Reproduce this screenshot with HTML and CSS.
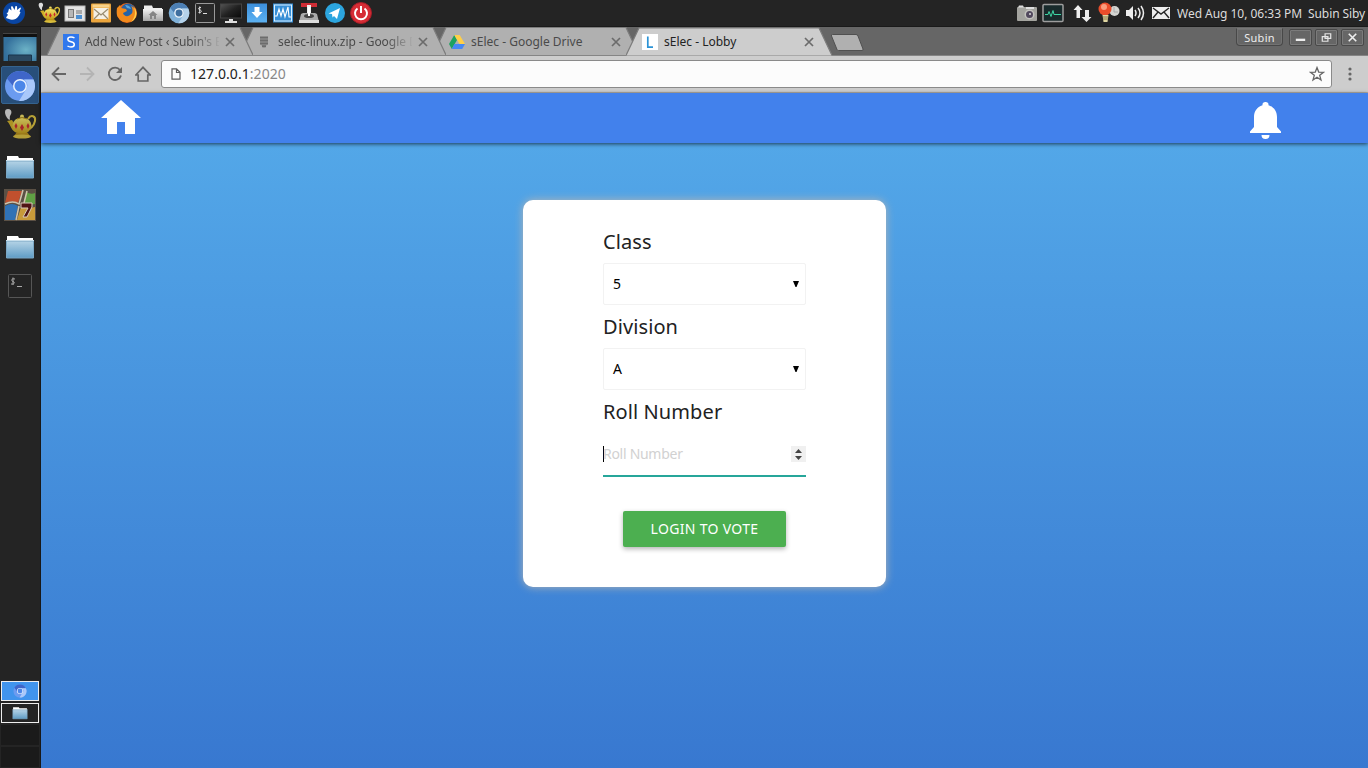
FILE: index.html
```html
<!DOCTYPE html>
<html lang="en">
<head>
<meta charset="utf-8">
<title>sElec - Lobby</title>
<link rel="stylesheet" href="styles.css">
</head>
<body>
<svg width="0" height="0" class="defs">
  <defs>
    <linearGradient id="gold" x2="0" y2="1"><stop stop-color="#f5e56a"/><stop offset="1" stop-color="#c19a16"/></linearGradient>
    <linearGradient id="fold" x2="0" y2="1"><stop stop-color="#b5d3e6"/><stop offset="1" stop-color="#5f9cc5"/></linearGradient>
    <linearGradient id="sky" x2="0" y2="1"><stop stop-color="#3b8edb"/><stop offset="1" stop-color="#5db2f2"/></linearGradient>
    <linearGradient id="silver" x2="0" y2="1"><stop stop-color="#f2f2f2"/><stop offset="1" stop-color="#a5a5a5"/></linearGradient>
    <linearGradient id="screen" x2="1" y2="1"><stop stop-color="#555"/><stop offset=".5" stop-color="#222"/><stop offset="1" stop-color="#080808"/></linearGradient>
    <radialGradient id="desk" cx=".68" cy=".55" r=".65"><stop stop-color="#6cb2c6"/><stop offset="1" stop-color="#34709c"/></radialGradient>
    <symbol id="teapot" viewBox="0 0 32 32">
      <path d="M4 11C0 6 0 1 4 1s4 4 2.500 6 0 4-1 5z" fill="#ddd"/>
      <path d="M24 11c3-5 8-3 7 2s-5 9-9 9" fill="none" stroke="#dcc13b" stroke-width="2"/>
      <path d="M3 13l5-1 3 5 2 8C7 23 7 17 3 13z" fill="#cfae25"/>
      <path d="M10 28h16l-3-4H13z" fill="#b78e18"/>
      <ellipse cx="18" cy="17.500" rx="9.500" ry="8" fill="url(#gold)"/>
      <ellipse cx="18" cy="28.500" rx="9" ry="2" fill="#d9bd3c"/>
      <circle cx="18" cy="8.500" r="2" fill="#efdc65"/>
      <path d="M13 11q5-3 10 0" fill="none" stroke="#a98510"/>
      <path d="M12 15l1.500 3-1.500 3-1.500-3zM18 16l2 3.500-2 3.500-2-3.500zM24 15l1.500 3-1.500 3-1.500-3z" fill="#c9252b"/>
    </symbol>
    <symbol id="folder" viewBox="0 0 30 24">
      <path d="M2 5V1h11l1 2h14v3H2z" fill="#fff"/><path d="M1.500 6h27v17h-27z" fill="url(#fold)" stroke="#7aa6c4"/><path d="M1 5.500h28" stroke="#c9dfec"/>
    </symbol>
    <symbol id="chromium" viewBox="0 0 32 32">
      <circle cx="16" cy="16" r="15" fill="#6b9bf0"/>
      <path d="M3 8.500A15 15 0 0 1 29.500 9.500H16a7 7 0 0 0-6.500 7z" fill="#3f66c9"/>
      <path d="M29.500 9.500A15 15 0 0 1 15 31l7-11.500a7 7 0 0 0-2-10z" fill="#a9c8fa"/>
      <circle cx="16" cy="16" r="7" fill="#e7f0fd"/><circle cx="16" cy="16" r="5.500" fill="#4b86e8"/>
    </symbol>
    <symbol id="chromium-pale" viewBox="0 0 32 32">
      <circle cx="16" cy="16" r="15" fill="#7fb0d8"/>
      <path d="M3 8.500A15 15 0 0 1 29.500 9.500H16a7 7 0 0 0-6.500 7z" fill="#4c7fb4"/>
      <path d="M29.500 9.500A15 15 0 0 1 15 31l7-11.500a7 7 0 0 0-2-10z" fill="#b4d2ea"/>
      <circle cx="16" cy="16" r="7" fill="#edf4fa"/><circle cx="16" cy="16" r="5" fill="#3f6f9f"/>
    </symbol>
    <symbol id="close" viewBox="0 0 10 10"><path d="M1 1l8 8M9 1l-8 8" stroke="#6b6b6b" stroke-width="1.700"/></symbol>
    <symbol id="shape" viewBox="0 0 206 28"><path d="M0 28L13 .5H193L206 28" stroke="#7c7c7c" stroke-width="1.200"/></symbol>
  </defs>
</svg>

<header class="panel">
  <svg class="start" viewBox="0 0 24 24"><circle cx="12" cy="12" r="11" fill="#0945a3"/><path d="M7 7.500l2.500 2-.5-4 1.500-.3 2 3.800L13.500 5l1.500.3.200 3.700 3-2.500.8.500-1.500 3.500 1 1-1.500 3c-2 4-7 5-10 3.500L4 17l1-2 1-1-1.500-2 1.500-.5z" fill="#fff"/></svg>
  <div class="launchers">
    <svg><use href="#teapot"/></svg>
    <svg viewBox="0 0 22 22"><rect x="1" y="4" width="20" height="15" fill="#e4e4e4" stroke="#bbb"/><rect x="4" y="7" width="6" height="9" fill="#777"/><rect x="5" y="8" width="4" height="7" fill="#b7b7b7"/><path d="M12 8h6v4h-6z" fill="#aaa"/><path d="M12 13h6v4h-6z" fill="#4c8fd2"/></svg>
    <svg viewBox="0 0 22 22"><rect x="1" y="1.500" width="20" height="19" rx="1" fill="#eba53d"/><path d="M2.500 2.500h17v3h-17z" fill="#f8d28a"/><rect x="3.500" y="6" width="15" height="11" fill="#f5f0e4"/><path d="M4 7l7 6 7-6M4 17l5-5M18 17l-5-5" fill="none" stroke="#9a8c70" stroke-width="1.200"/></svg>
    <svg viewBox="0 0 22 22"><circle cx="11" cy="11" r="10" fill="#e8681a"/><circle cx="12" cy="8.500" r="7" fill="#2663a8"/><path d="M9 3c3 0 5 1 6 4l-4-1z" fill="#59a5dc"/><path d="M1 6l3-3 1 3 5 1 1 2-4 2c1 4 6 4 8 1 2 0 2-6 0-8 6 2 7 9 3 13-5 5-13 4-16-2C.5 14 .5 9 1 6z" fill="#f28a1c"/><path d="M18 5c4 5 3 12-3 15 4-5 5-9 3-15z" fill="#ffd34c"/></svg>
    <svg viewBox="0 0 22 22"><path d="M2 7V3.500h8L11 6h9v3H2z" fill="#eee"/><path d="M1 7h20v12H1z" fill="url(#silver)"/><path d="M11 9l-4.500 4H8v4h2v-3h2v3h2v-4h1.500z" fill="#858585"/></svg>
    <svg viewBox="0 0 32 32"><use href="#chromium-pale"/></svg>
    <svg viewBox="0 0 22 22"><rect x="1.500" y="1.500" width="19" height="19" rx="1" fill="#292929" stroke="#999"/><path d="M7 5.500c-3-.5-3 2-1 2.500s2 3-1.500 2.500M5.700 4.500v7M9 11.500h4" fill="none" stroke="#ddd"/></svg>
    <svg viewBox="0 0 22 22"><rect x=".5" y="2" width="21" height="14" fill="url(#screen)" stroke="#444"/><path d="M9 17h4v2h4v2H5v-2h4z" fill="#ddd"/></svg>
    <svg viewBox="0 0 22 22"><rect x="1" y="1.500" width="20" height="19" fill="url(#sky)"/><path d="M8.500 5h5v5h3L11 16l-5.500-6h3z" fill="#fff"/></svg>
    <svg viewBox="0 0 22 22"><rect x="1" y="1.500" width="20" height="19" fill="#368ed6"/><rect x="2.500" y="3" width="17" height="16" fill="none" stroke="#d9efff"/><path d="M3 14h2l2-7 2 7 2-7 2 8 3-10 1 10h2" fill="none" stroke="#fff" stroke-width="1.100"/></svg>
    <svg viewBox="0 0 22 22"><path d="M3 1h16v4H3z" fill="#cf2c35"/><path d="M9 3h4v12H9z" fill="#eee"/><path d="M3 12l2-1h12l2 1 1.500 6h-19z" fill="#aaa"/><ellipse cx="11" cy="14" rx="5" ry="2" fill="#444"/><path d="M10 5h2v9h-2z" fill="#fff"/><path d="M1 18h20v3H1z" fill="#ddd"/></svg>
    <svg viewBox="0 0 22 22"><circle cx="11" cy="11" r="10" fill="#2ca5df"/><path d="M4.500 11.500L16 6l-3 11-3-3-1.500 1.500-.5-3.500z" fill="#fff"/></svg>
    <svg viewBox="0 0 22 22"><circle cx="11" cy="11" r="10.500" fill="#d62c35" stroke="#a41e28"/><path d="M7.500 6.500a6 6 0 1 0 7 0M11 4v7" fill="none" stroke="#fff" stroke-width="2"/></svg>
  </div>
  <div class="tray">
    <svg viewBox="0 0 22 22"><rect x="1" y="5" width="20" height="14" rx="1" fill="#a4a49f"/><path d="M2 5.500l1-2h4l1 2zM10 5h8v2h-8z" fill="#ddd"/><circle cx="13.500" cy="12.500" r="5" fill="#c3c3be"/><circle cx="13.500" cy="12.500" r="3.500" fill="#52495e"/><circle cx="14" cy="12" r="1" fill="#ddd"/></svg>
    <svg viewBox="0 0 22 22"><rect x="1" y="2.500" width="20" height="17" rx="1" fill="#182a2b" stroke="#9d9d9d" stroke-width="1.500"/><path d="M3 12.500h3l1-3 2 5 2-6 1 4h7" fill="none" stroke="#3dd5a4"/></svg>
    <svg class="net" viewBox="0 0 22 22"><path d="M6 3l4.500 5H8v8H4.500V8h-3zM14.500 20l5-5H17V8h-4v7H9.500z" fill="#eee"/></svg>
    <svg viewBox="0 0 22 22"><circle cx="16.500" cy="9" r="5" fill="#d5d5d2"/><path d="M16 5v5h4" stroke="#aaa" fill="none"/><circle cx="7" cy="7" r="6.500" fill="#e94d2b"/><circle cx="6" cy="5" r="3" fill="#f99c7d"/><path d="M4.500 13h6l-1 7h-4z" fill="#e0d7a1"/><path d="M5 15h5M5 17h5" stroke="#867d50"/></svg>
    <svg viewBox="0 0 22 22"><path d="M2 8h3l4-4v14l-4-4H2z" fill="#eee"/><path d="M11 8q2 3 0 6M14 6q4 5 0 10M17 4q5 7 0 14" fill="none" stroke="#eee" stroke-width="1.500"/></svg>
    <svg viewBox="0 0 22 22"><rect x="2" y="5" width="18" height="12" fill="#eee"/><path d="M3 6l8 6 8-6M3 16l5-6M19 16l-5-6" fill="none" stroke="#262626" stroke-width="1.400"/></svg>
    <span class="clock">Wed Aug 10, 06:33 PM</span>
    <span class="user">Subin Siby</span>
  </div>
</header>

<div class="desktop">
  <aside class="dock">
    <svg class="deskicon" viewBox="0 0 34 30"><rect x=".5" y="3" width="33" height="25" fill="url(#desk)"/><path d="M0 0h34v4H0z" fill="#111"/><path d="M0 .5h34" stroke="#444"/><path d="M5.500 28v-6h23v6" fill="#2b4961" stroke="#18354c"/></svg>
    <div class="running"><svg><use href="#chromium"/></svg></div>
    <svg class="pot"><use href="#teapot"/></svg>
    <svg class="dir"><use href="#folder"/></svg>
    <svg class="seven" viewBox="0 0 32 32"><rect width="32" height="32" fill="#5b5045"/><path d="M4 2h14l-4 12Q7 11 1 14z" fill="#c1502e"/><path d="M22 3q5 3 9 1v11q-6 1-11-2z" fill="#5fa044"/><path d="M1 17q7-4 13 0l-3 14H1z" fill="#3072b6"/><path d="M17 18q7 2 14 0v13H13z" fill="#c79a3a"/><path d="M1 15q8-4 14 0L19 1M20 14l3-12M12 31l3-14" fill="none" stroke="#cfc4ae" stroke-width="1.500"/><path d="M17 14h11v4l-5 10h-4l5-9h-7z" fill="#501515" stroke="#d8cbbb"/></svg>
    <svg class="dir second"><use href="#folder"/></svg>
    <svg class="term" viewBox="0 0 26 26"><rect x="1.500" y="1.500" width="23" height="23" rx="1" fill="#242424" stroke="#565656"/><path d="M8 6c-4-1-4 2-2 2.500s2 3-2 2.500M6 4.500V12M10 13.500h5" fill="none" stroke="#aaa"/></svg>
    <div class="pager">
      <div class="space on"><svg><use href="#chromium"/></svg></div>
      <div class="space framed"><svg><use href="#folder"/></svg></div>
      <div class="space"></div>
      <div class="space"></div>
    </div>
  </aside>

  <section class="window">
    <div class="strip">
      <div class="tab t1"><svg class="shape"><use href="#shape"/></svg>
        <svg class="fav" viewBox="0 0 16 16"><rect width="16" height="16" fill="#3078ed"/><path d="M11.500 4Q10 3 8 3 4.800 3 4.800 5.200 4.800 7 8 7.800q3.300.8 3.300 2.700Q11.300 13 8 13q-2 0-3.500-1" fill="none" stroke="#fff" stroke-width="1.500"/></svg>
        <span class="title">Add New Post ‹ Subin's B</span><svg class="x"><use href="#close"/></svg></div>
      <div class="tab t2"><svg class="shape"><use href="#shape"/></svg>
        <svg class="fav" viewBox="0 0 16 16"><path d="M4 3.500h8M4 6.500h8M4 9.500h8M6 12.300h4" stroke="#6c6c6c" stroke-width="2"/><path d="M4 3h8v7l-4 4-4-4z" fill="#6c6c6c" opacity=".35"/></svg>
        <span class="title">selec-linux.zip - Google D</span><svg class="x"><use href="#close"/></svg></div>
      <div class="tab t3"><svg class="shape"><use href="#shape"/></svg>
        <svg class="fav" viewBox="0 0 16 16"><path d="M5.300 1L0 10l2.800 5L8 6z" fill="#1da261"/><path d="M5.300 1h5.400L16 10h-5.500z" fill="#ffcf48"/><path d="M5.300 10H16l-2.800 5H2.800z" fill="#4688f4"/></svg>
        <span class="title">sElec - Google Drive</span><svg class="x"><use href="#close"/></svg></div>
      <div class="tab t4"><svg class="shape"><use href="#shape"/></svg>
        <svg class="fav" viewBox="0 0 16 16"><rect width="16" height="16" fill="#fff"/><path d="M5.800 2.500v10.700H11" fill="none" stroke="#2b93d6" stroke-width="1.700"/></svg>
        <span class="title">sElec - Lobby</span><svg class="x"><use href="#close"/></svg></div>
      <svg class="newtab" viewBox="0 0 36 20"><path d="M3.500 1.500H27q1.500 0 2 1.500l5 13q.5 1.500-1 1.500H9.500q-1 0-1.500-1L2.500 3q-.5-1.500 1-1.500z" fill="#b0b0b0" stroke="#505050"/></svg>
      <div class="controls">
        <span class="profile">Subin</span>
        <span class="ctl"><svg viewBox="0 0 22 16"><path d="M6 10.500h10" stroke="#eee" stroke-width="2.500"/></svg></span>
        <span class="ctl"><svg viewBox="0 0 22 16"><path d="M9.500 4h6v5h-6zM6.500 7h6v5h-6z" fill="none" stroke="#e5e5e5" stroke-width="1.300"/></svg></span>
        <span class="ctl"><svg viewBox="0 0 22 16"><path d="M7 4l8 8M15 4l-8 8" stroke="#eee" stroke-width="1.700"/></svg></span>
      </div>
    </div>

    <div class="toolbar">
      <svg viewBox="0 0 16 16"><path d="M15 8H2M8 1.500L1.500 8 8 14.500" fill="none" stroke="#666" stroke-width="1.800"/></svg>
      <svg viewBox="0 0 16 16"><path d="M1 8h13M8 1.500L14.500 8 8 14.500" fill="none" stroke="#b4b4b4" stroke-width="1.800"/></svg>
      <svg viewBox="0 0 16 16"><path d="M13 4A6.200 6.200 0 1 0 14 9.500" fill="none" stroke="#666" stroke-width="1.800"/><path d="M15 1v6H9z" fill="#666"/></svg>
      <svg viewBox="0 0 16 16"><path d="M.8 9L8 1.300 15.200 9H12.800v6H3.200V9z" fill="none" stroke="#666" stroke-width="1.700"/></svg>
      <div class="url">
        <svg class="doc" viewBox="0 0 10 12"><path d="M1 .8h4.500L9 4.200v7H1zM5.500.8v3.700H9" fill="none" stroke="#5c5c5c" stroke-width="1.200"/></svg>
        <span class="addr">127.0.0.1<i>:2020</i></span>
        <svg class="star" viewBox="0 0 16 16"><path d="M8 1.600l1.700 4.500 4.800.2-3.800 3 1.300 4.700L8 11.300 4 14l1.300-4.700-3.800-3 4.800-.2z" fill="none" stroke="#666" stroke-width="1.300"/></svg>
      </div>
      <svg class="menu" viewBox="0 0 4 16"><circle cx="2" cy="3" r="1.600" fill="#666"/><circle cx="2" cy="8" r="1.600" fill="#666"/><circle cx="2" cy="13" r="1.600" fill="#666"/></svg>
    </div>

    <main class="page">
      <nav class="appbar">
        <svg class="home" viewBox="0 0 40 34"><path d="M20 0l20 18h-6v16H24V22h-8v12H6V18H0z" fill="#fff"/></svg>
        <svg class="bell" viewBox="0 0 31 37"><path d="M15.500 0a3 3 0 0 1 3 3.300C24 5 27 9.500 27 15v10l4 4.500V31H0v-1.500L4 25V15C4 9.500 7 5 12.500 3.300a3 3 0 0 1 3-3.300zM11.500 33h8a4 4 0 0 1-8 0z" fill="#fff"/></svg>
      </nav>
      <form class="card">
        <label>Class</label>
        <div class="select"><span>5</span><svg viewBox="0 0 6 6"><path d="M0 0h6L3.500 6h-1z"/></svg></div>
        <label>Division</label>
        <div class="select"><span>A</span><svg viewBox="0 0 6 6"><path d="M0 0h6L3.500 6h-1z"/></svg></div>
        <label>Roll Number</label>
        <div class="field"><span class="caret"></span><span class="hint">Roll Number</span><svg class="spin" viewBox="0 0 15 16"><rect width="15" height="16" fill="#f0f0f0"/><path d="M4 7l3.500-4L11 7zM4 10h7l-3.500 4z" fill="#444"/></svg></div>
        <button type="button">LOGIN TO VOTE</button>
      </form>
    </main>
  </section>
</div>
</body>
</html>
```
FILE: styles.css
```css
* { box-sizing: border-box; }
body { margin: 0; width: 1368px; height: 768px; overflow: hidden; display: flex; flex-direction: column; font-family: "Noto Sans", sans-serif; background: #232323; }
svg { display: block; flex: none; }
.defs { position: absolute; }

.panel { height: 27px; flex: none; display: flex; align-items: center; background: #242424; border-bottom: 1px solid #1a1a1a; color: #dcdcdc; font-size: 12px; padding-left: 2px; }
.start { width: 24px; height: 24px; }
.launchers { display: flex; gap: 4px; margin-left: 12px; }
.launchers svg, .tray svg { width: 22px; height: 22px; }
.tray { display: flex; align-items: center; gap: 4px; margin-left: auto; padding-right: 3px; white-space: nowrap; }
.tray .net { margin-left: 4px; }
.clock { margin-left: 1px; width: 127px; letter-spacing: -.03px; }
.user { width: 57px; letter-spacing: -.08px; }

.desktop { display: flex; flex: 1; min-height: 0; }
.dock { width: 41px; flex: none; background: #242424; border-right: 1px solid #181818; display: flex; flex-direction: column; align-items: center; padding: 6px 1px 0 0; }
.deskicon { width: 34px; height: 30px; }
.running { width: 38px; height: 38px; margin-top: 3px; padding-top: 2px; background: #284f7a; border: 1px solid #35638e; border-radius: 2px; display: flex; align-items: center; justify-content: center; }
.running svg { width: 32px; height: 32px; }
.pot { width: 34px; height: 32px; margin-top: 4px; opacity: .8; }
.dir { width: 30px; height: 24px; margin-top: 15px; }
.seven { width: 32px; height: 32px; margin-top: 10px; }
.dir.second { margin-top: 14px; }
.term { width: 26px; height: 26px; margin-top: 14px; }
.pager { margin-top: auto; display: flex; flex-direction: column; gap: 2px; margin-bottom: 1px; }
.space { width: 38px; height: 20px; background: #1a1a1a; display: flex; align-items: center; justify-content: center; }
.space.on { background: #4094ed; border: 1px solid #eee; }
.space.framed { background: #242424; border: 1px solid #eee; }
.space svg { width: 16px; height: 14px; }

.window { flex: 1; min-width: 0; display: flex; flex-direction: column; }
.strip { height: 29px; flex: none; background: #666; border-bottom: 1px solid #858585; display: flex; padding-left: 6px; position: relative; }
.tab { width: 206px; height: 28px; flex: none; margin-right: -13px; display: flex; align-items: center; padding: 1px 17px 0 16px; position: relative; color: #4a4a4a; font-size: 12px; fill: #b0b0b0; }
.tab.t1 { z-index: 3; }
.tab.t2 { z-index: 2; }
.tab.t3 { z-index: 1; }
.tab.t4 { z-index: 4; height: 29px; margin-bottom: -1px; padding-bottom: 1px; fill: #cdcdcd; color: #222; }
.shape { position: absolute; left: 0; top: 0; width: 206px; height: 28px; z-index: -1; }
.t4 .shape { height: 29px; }
.fav { width: 16px; height: 16px; }
.title { width: 134px; margin-left: 6px; margin-right: 6px; overflow: hidden; white-space: nowrap; }
.t1 .title, .t2 .title { letter-spacing: -.06px; -webkit-mask-image: linear-gradient(90deg, #000 108px, transparent 136px); mask-image: linear-gradient(90deg, #000 108px, transparent 136px); }
.x { width: 10px; height: 10px; }
.newtab { width: 36px; height: 20px; margin: 6px 0 0 10px; }
.controls { margin-left: auto; display: flex; gap: 3px; padding: 2px 4px 0 0; }
.profile { width: 47px; height: 18px; margin: -1px 3px 0 0; border: 1px solid #484848; border-top-color: #777; box-shadow: inset 0 0 0 1px #727272; border-radius: 0 0 4px 4px; color: #eee; font-size: 11px; line-height: 17px; letter-spacing: .3px; text-align: center; }
.ctl { width: 23px; height: 17px; border: 1px solid #494949; border-radius: 2px; box-shadow: inset 0 0 0 1px #7b7b7b; }
.ctl svg { width: 21px; height: 15px; }

.toolbar { height: 37px; flex: none; background: #cdcdcd; border-bottom: 1px solid #b5b0a8; display: flex; align-items: center; gap: 12px; padding: 0 16px 0 10px; }
.toolbar > svg { width: 16px; height: 16px; }
.url { flex: 1; height: 28px; margin-left: -2px; background: #fcfcfc; border: 1px solid #8a8a8a; border-radius: 3px; display: flex; align-items: center; padding: 0 6px 0 9px; }
.doc { width: 10px; height: 12px; }
.addr { margin-left: 9px; padding-bottom: 2px; font-size: 14px; color: #222; letter-spacing: .05px; }
.addr i { font-style: normal; color: #888; }
.star { width: 16px; height: 16px; margin-left: auto; }
.toolbar > .menu { width: 4px; height: 16px; margin-left: 4px; }

.page { flex: 1; min-height: 0; display: flex; flex-direction: column; align-items: center; background: linear-gradient(#55abea, #3878d0); }
.appbar { width: 100%; height: 50px; flex: none; background: #4281ec; box-shadow: 0 1px 4px rgba(0,0,0,.65); display: flex; justify-content: space-between; padding: 7px 87px 0 60px; }
.home { width: 40px; height: 34px; }
.bell { width: 31px; height: 37px; margin-top: 1.5px; }
.card { width: 363px; height: 387px; margin: 57px 0 0; padding: 27px 80px 0; background: #fff; border-radius: 10px; box-shadow: 0 0 8px #b5b5b5; display: flex; flex-direction: column; }
.card label { height: 30px; line-height: 30px; font-size: 20px; letter-spacing: .1px; color: #222; white-space: nowrap; }
.select { height: 42px; margin: 6px 0 7px; border: 1px solid #f2f2f2; border-radius: 2px; display: flex; align-items: center; justify-content: space-between; padding: 0 6px 0 9px; font-size: 14px; color: #000; }
.select span { padding-bottom: 2px; }
.select svg { width: 6px; height: 6px; }
.field { height: 46px; margin-top: 4px; padding-top: 1px; border-bottom: 2px solid #26a69a; display: flex; align-items: center; font-size: 14px; color: #d1d1d1; }
.hint { padding-bottom: 1px; letter-spacing: -.28px; }
.caret { width: 1px; height: 16px; background: #000; margin-right: -1px; }
.spin { width: 15px; height: 16px; margin-left: auto; }
.card button { width: 163px; height: 36px; margin: 34px 0 0 20px; padding: 0 0 2px; border: 0; border-radius: 2px; background: #4caf50; color: #fff; font: 14px "Noto Sans", sans-serif; letter-spacing: .32px; box-shadow: 0 2px 5px rgba(0,0,0,.3); }
```
